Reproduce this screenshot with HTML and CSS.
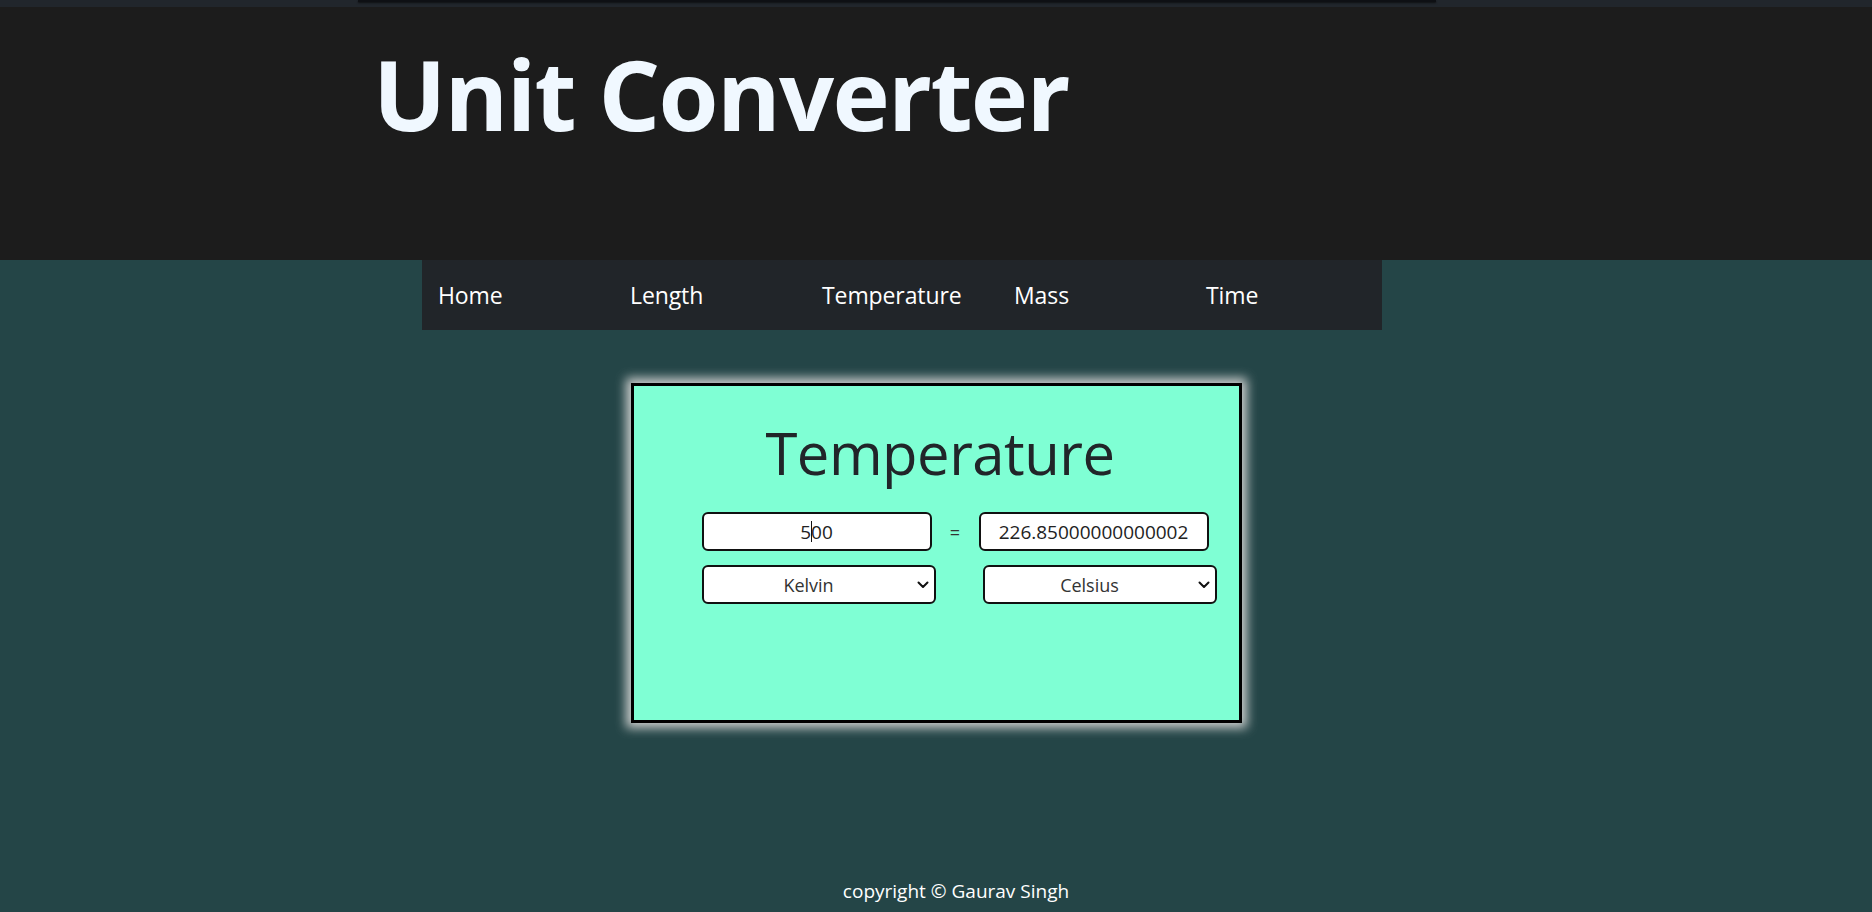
FILE: index.html
```html
<!DOCTYPE html>
<html lang="en">
<head>
<meta charset="utf-8">
<title>Unit Converter</title>
<link rel="stylesheet" href="styles.css">
</head>
<body>
<div class="topbar"><div class="topline"></div></div>
<header class="hero">
  <h1 class="title">Unit Converter</h1>
</header>
<nav class="menu">
  <a class="menu-item" href="#">Home</a>
  <a class="menu-item" href="#">Length</a>
  <a class="menu-item" href="#">Temperature</a>
  <a class="menu-item" href="#">Mass</a>
  <a class="menu-item" href="#">Time</a>
</nav>
<main class="content">
  <section class="card">
    <h2 class="card-title">Temperature</h2>
    <div class="row">
      <span class="field-wrap">
        <input class="field" type="text" value="500">
        <span class="caret"></span>
      </span>
      <span class="equals">=</span>
      <input class="field" type="text" value="226.85000000000002">
    </div>
    <div class="row row-selects">
      <span class="select-wrap">
        <select class="unit"><option>Kelvin</option><option>Celsius</option><option>Fahrenheit</option></select>
        <svg class="chev" width="12" height="8" viewBox="0 0 12 8"><path d="M1.5 1.5 L6 6 L10.5 1.5" fill="none" stroke="#111" stroke-width="2" stroke-linecap="round" stroke-linejoin="round"/></svg>
      </span>
      <span class="select-wrap">
        <select class="unit"><option>Celsius</option><option>Kelvin</option><option>Fahrenheit</option></select>
        <svg class="chev" width="12" height="8" viewBox="0 0 12 8"><path d="M1.5 1.5 L6 6 L10.5 1.5" fill="none" stroke="#111" stroke-width="2" stroke-linecap="round" stroke-linejoin="round"/></svg>
      </span>
    </div>
  </section>
</main>
<footer class="footer">copyright © Gaurav Singh</footer>
</body>
</html>
```

FILE: styles.css
```css
html, body {
  margin: 0;
  padding: 0;
}
body {
  background: #244547;
  font-family: "Open Sans", "Noto Sans", sans-serif;
  height: 912px;
  display: flex;
  flex-direction: column;
  overflow: hidden;
}
.topbar {
  height: 7px;
  background: #21262c;
}
.topline {
  margin-left: 358px;
  width: 1078px;
  height: 2px;
  background: #0e1014;
  box-shadow: 0 1px 2px rgba(0,0,0,0.6);
}
.hero {
  height: 253px;
  background: #1c1c1c;
  padding-left: 373px;
  box-sizing: border-box;
}
.title {
  margin: 0;
  padding-top: 28px;
  color: #f0f8ff;
  font-size: 97px;
  font-weight: 700;
  line-height: 1.2;
  letter-spacing: -1.7px;
}
.menu {
  margin-left: 422px;
  width: 960px;
  height: 70px;
  background: #212529;
  display: grid;
  grid-template-columns: repeat(5, 1fr);
  align-items: center;
}
.menu-item {
  padding-left: 16px;
  color: #fff;
  text-decoration: none;
  font-size: 23px;
  letter-spacing: -0.1px;
}
.content {
  flex: 1;
}
.card {
  box-sizing: border-box;
  width: 611px;
  height: 340px;
  margin: 53px auto 0;
  background: #7fffd4;
  border: 3px solid #000;
  box-shadow: 0 0 10px 5px #c9cccb;
  padding-top: 27px;
}
.card-title {
  margin: 0 0 19px;
  padding-left: 8px;
  text-align: center;
  font-size: 58px;
  font-weight: 400;
  color: #212529;
  line-height: 80px;
  letter-spacing: -0.5px;
}
.row {
  display: flex;
  align-items: center;
  padding-left: 68px;
}
.row-selects {
  margin-top: 14px;
  gap: 47px;
}
.field-wrap {
  position: relative;
  display: inline-block;
}
.field {
  box-sizing: border-box;
  width: 230px;
  height: 39px;
  border: 2px solid #111;
  border-radius: 6px;
  background: #fff;
  text-align: center;
  font-family: "Open Sans", "Noto Sans", sans-serif;
  font-size: 19px;
  color: #222;
  padding: 0 4px;
  outline: none;
  display: block;
}
.caret {
  position: absolute;
  left: 109px;
  top: 9px;
  width: 1px;
  height: 21px;
  background: #111;
}
.equals {
  width: 47px;
  text-align: center;
  font-size: 18px;
  color: #333;
}
.select-wrap {
  position: relative;
  display: inline-block;
}
.unit {
  box-sizing: border-box;
  width: 234px;
  height: 39px;
  border: 2px solid #111;
  border-radius: 6px;
  background: #fff;
  -webkit-appearance: none;
  appearance: none;
  text-align: center;
  text-align-last: center;
  font-family: "Open Sans", "Noto Sans", sans-serif;
  font-size: 18px;
  color: #333;
  padding: 0 20px 0 0;
  display: block;
}
.chev {
  position: absolute;
  right: 7px;
  top: 16px;
  pointer-events: none;
}
.footer {
  text-align: center;
  padding: 0 0 9px 40px;
  color: #fff;
  font-size: 19px;
  line-height: 24px;
}
```
